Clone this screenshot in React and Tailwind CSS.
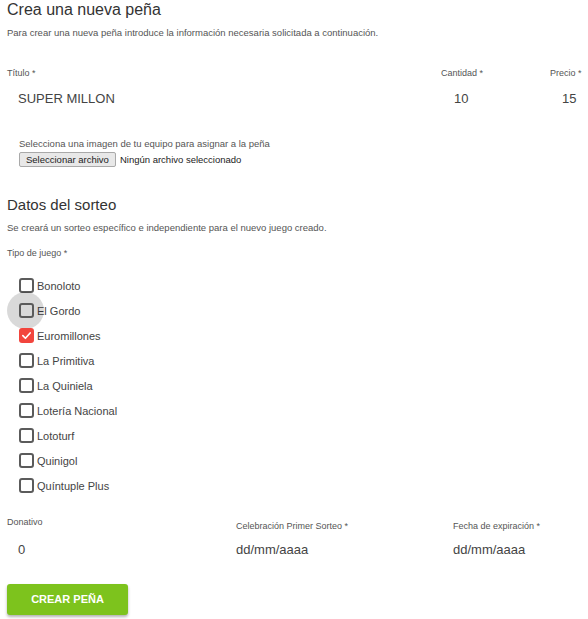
import React from 'react';

const juegos = [
  { name: 'Bonoloto' },
  { name: 'El Gordo', focus: true },
  { name: 'Euromillones', checked: true },
  { name: 'La Primitiva' },
  { name: 'La Quiniela' },
  { name: 'Lotería Nacional' },
  { name: 'Lototurf' },
  { name: 'Quinigol' },
  { name: 'Quíntuple Plus' },
];

const font = { fontFamily: '"Liberation Sans", Arial, sans-serif' };

const Checkbox = ({ name, checked, focus }) => (
  <div className="flex items-center h-[25px] pl-[12px]">
    <div className="relative w-[15px] h-[15px] shrink-0">
      {focus && (
        <div className="absolute -left-[12px] -top-[11px] w-[37px] h-[37px] rounded-full bg-black/15" />
      )}
      {checked ? (
        <div className="relative w-[15px] h-[15px] rounded-[3px] bg-[#f2453d] flex items-center justify-center">
          <svg width="11" height="11" viewBox="0 0 12 12" fill="none">
            <path d="M2 6.2 L4.8 9 L10 3.2" stroke="white" strokeWidth="1.8" strokeLinecap="round" strokeLinejoin="round" />
          </svg>
        </div>
      ) : (
        <div className="relative w-[15px] h-[15px] rounded-[3px] border-2 border-[#5b5b5b]" />
      )}
    </div>
    <span className="ml-[3px] text-[11px] leading-[14px] text-[#444]">{name}</span>
  </div>
);

export default function App() {
  return (
    <div className="w-[588px] h-[619px] bg-white px-[7px] text-[#444] overflow-hidden" style={font}>
      <h1 className="text-[16px] leading-[20px] text-[#333]">Crea una nueva peña</h1>
      <p className="mt-[7px] text-[9.5px] leading-[12px] text-[#555]">
        Para crear una nueva peña introduce la información necesaria solicitada a continuación.
      </p>

      <div className="flex mt-[28px]">
        <div className="flex-1">
          <div className="text-[9px] leading-[12px] text-[#555]">Título *</div>
          <div className="mt-[12px] pl-[11px] text-[13px] leading-[16px] text-[#444]">SUPER MILLON</div>
        </div>
        <div className="w-[109px]">
          <div className="text-[9px] leading-[12px] text-[#555]">Cantidad *</div>
          <div className="mt-[12px] pl-[13px] text-[13px] leading-[16px] text-[#444]">10</div>
        </div>
        <div className="w-[31px]">
          <div className="text-[9px] leading-[12px] text-[#555] whitespace-nowrap">Precio *</div>
          <div className="mt-[12px] pl-[12px] text-[13px] leading-[16px] text-[#444]">15</div>
        </div>
      </div>

      <div className="pl-[12px] mt-[31px]">
        <div className="text-[9.5px] leading-[12px] text-[#555]">Selecciona una imagen de tu equipo para asignar a la peña</div>
        <div className="flex items-center mt-[2px]">
          <button className="h-[15px] px-[6px] bg-[#e8e8e8] border border-[#a9a9a9] rounded-[2px] text-[9.5px] leading-[12px] text-[#222]">
            Seleccionar archivo
          </button>
          <span className="ml-[4px] text-[9.5px] leading-[12px] text-[#222]">Ningún archivo seleccionado</span>
        </div>
      </div>

      <h2 className="mt-[28px] text-[15px] leading-[20px] text-[#333]">Datos del sorteo</h2>
      <p className="mt-[7px] text-[9.5px] leading-[12px] text-[#555]">
        Se creará un sorteo específico e independiente para el nuevo juego creado.
      </p>
      <div className="mt-[13px] text-[9px] leading-[12px] text-[#555]">Tipo de juego *</div>

      <div className="mt-[14px]">
        {juegos.map((j) => (
          <Checkbox key={j.name} {...j} />
        ))}
      </div>

      <div className="flex mt-[18px]">
        <div className="w-[229px]">
          <div className="text-[9px] leading-[12px] text-[#555]">Donativo</div>
          <div className="mt-[14px] pl-[11px] text-[13px] leading-[16px] text-[#444]">0</div>
        </div>
        <div className="w-[217px] pt-[4px]">
          <div className="text-[9px] leading-[12px] text-[#555]">Celebración Primer Sorteo *</div>
          <div className="mt-[10px] text-[13px] leading-[16px] text-[#444]">dd/mm/aaaa</div>
        </div>
        <div className="flex-1 pt-[4px]">
          <div className="text-[9px] leading-[12px] text-[#555]">Fecha de expiración *</div>
          <div className="mt-[10px] text-[13px] leading-[16px] text-[#444]">dd/mm/aaaa</div>
        </div>
      </div>

      <button className="mt-[26px] w-[121px] h-[31px] rounded-[3px] bg-[#7dc31d] text-white text-[11px] font-bold shadow-[0_2px_3px_rgba(0,0,0,0.3)]">
        CREAR PEÑA
      </button>
    </div>
  );
}
